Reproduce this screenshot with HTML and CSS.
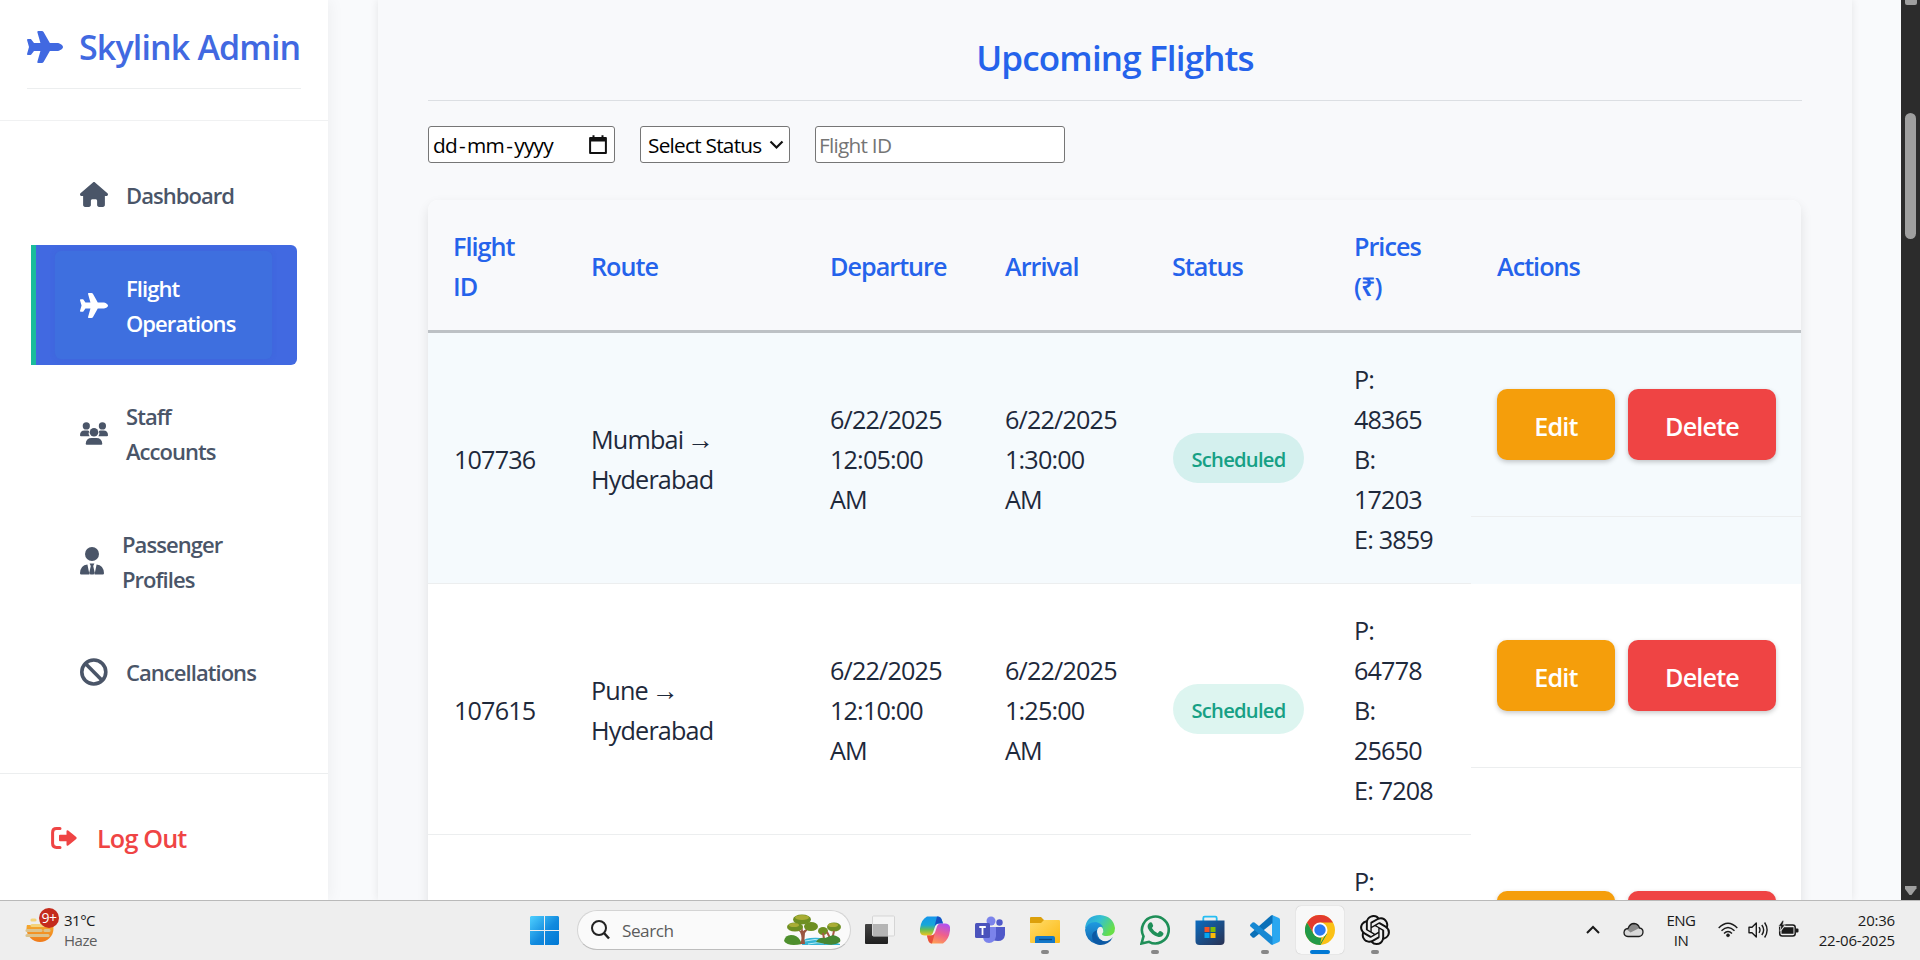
FILE: index.html
```html
<!DOCTYPE html>
<html lang="en">
<head>
<meta charset="utf-8">
<title>Skylink Admin</title>
<link rel="stylesheet" href="styles.css">
</head>
<body>
<svg class="defs" width="0" height="0" aria-hidden="true">
  <symbol id="plane" viewBox="0 0 576 512"><path d="M482.3 192c34.2 0 93.7 29 93.7 64c0 36-59.5 64-93.7 64l-116.6 0L265.2 495.9c-5.7 10-16.3 16.1-27.8 16.1l-56.2 0c-10.6 0-18.3-10.2-15.4-20.4l49-171.6L112 320 68.8 377.6c-3 4-7.8 6.4-12.8 6.4l-42 0c-7.8 0-14-6.3-14-14c0-1.3 .2-2.6 .5-3.9L32 256 .5 145.9c-.4-1.3-.5-2.6-.5-3.9c0-7.8 6.3-14 14-14l42 0c5 0 9.8 2.4 12.8 6.4L112 192l102.9 0-49-171.6C162.9 10.2 170.6 0 181.2 0l56.2 0c11.5 0 22.1 6.2 27.8 16.1L365.7 192l116.6 0z"/></symbol>
</svg>
<div class="app">
  <aside class="sidebar">
    <header class="brand">
      <div class="brand-row"><svg width="36" height="32" fill="currentColor"><use href="#plane"/></svg><span>Skylink Admin</span></div>
    </header>
    <nav class="nav">
      <a class="nav-item"><svg width="28" height="25" viewBox="0 0 576 512" fill="currentColor"><path d="M575.8 255.5c0 18-15 32.1-32 32.1h-32l.7 160.2c0 2.7-.2 5.4-.5 8.1V472c0 22.1-17.9 40-40 40H456c-1.1 0-2.2 0-3.3-.1c-1.4 .1-2.8 .1-4.2 .1H416 392c-22.1 0-40-17.9-40-40V448 384c0-17.7-14.3-32-32-32H256c-17.7 0-32 14.3-32 32v64 24c0 22.1-17.9 40-40 40H160 128.1c-1.5 0-3-.1-4.5-.2c-1.2 .1-2.4 .2-3.6 .2H104c-22.1 0-40-17.9-40-40V360c0-.9 0-1.9 .1-2.8V287.6H32c-18 0-32-14-32-32.1c0-9 3-17 10-24L266.4 8c7-7 15-8 22-8s15 2 21 7L564.8 231.5c8 7 12 15 11 24z"/></svg><span>Dashboard</span></a>
      <a class="nav-item active"><svg width="28" height="25" fill="currentColor"><use href="#plane"/></svg><span>Flight<br>Operations</span></a>
      <a class="nav-item"><svg width="28" height="23" viewBox="0 0 28 23" fill="currentColor"><circle cx="6.3" cy="3.9" r="3.6"/><circle cx="22.4" cy="3.9" r="3.6"/><circle cx="14" cy="10.2" r="4.3"/><path d="M0 13.2Q0 8.7 4.5 8.6h3.2q1 0 1.4.4-1.2 2.8.5 5.3H1Q0 14.3 0 13.2zM28 13.2q0-4.5-4.5-4.6h-3.2q-1 0-1.4.4 1.2 2.8-.5 5.3H27q1 0 1-1.1zM5.7 21.7q.3-5.7 6-5.7h4.6q5.7 0 6 5.7 0 1-1 1H6.7q-1 0-1-1z"/></svg><span>Staff<br>Accounts</span></a>
      <a class="nav-item"><svg width="24" height="28" viewBox="0 0 24 28" fill="currentColor"><circle cx="12" cy="7" r="7"/><path d="M0 26.200Q.4 18 7.400 17.400L9.500 27.600H1.300Q0 27.600 0 26.200zM24 26.200q-.4-8.200-7.400-8.800l-2.100 10.200h8.200q1.300 0 1.300-1.400zM9.600 16.400h4.800L13.200 19l1.600 7-1.200 1.600h-3.200L9.200 26l1.600-7z"/></svg><span>Passenger<br>Profiles</span></a>
      <a class="nav-item"><svg width="28" height="28" viewBox="0 0 28 28" fill="none" stroke="currentColor" stroke-width="3.6"><circle cx="13.8" cy="14" r="12"/><path d="M5.4 5.6l16.8 16.8"/></svg><span>Cancellations</span></a>
    </nav>
    <footer class="logout"><svg width="26" height="22" viewBox="0 0 26 22"><path d="M9 1.6H5.5Q1.6 1.6 1.6 5.5v11q0 3.9 3.9 3.9H9" fill="none" stroke="currentColor" stroke-width="3" stroke-linecap="round"/><path d="M9 7.8h6.5V4.5q0-1.7 1.7-1 .3.1 8 6.5.9 1 0 2-7.7 6.4-8 6.5-1.7.7-1.7-1v-3.3H9q-1 0-1-1V8.8q0-1 1-1z" fill="currentColor"/></svg><span>Log Out</span></footer>
  </aside>
  <main class="content">
    <section class="panel">
      <h2>Upcoming Flights</h2>
      <div class="filters">
        <div class="date"><span>dd<i>-</i>mm<i>-</i>yyyy</span><svg width="18" height="19" viewBox="0 0 18 19"><path d="M1.1 3h15.800v14.900H1.100z" fill="none" stroke="#111" stroke-width="2" stroke-linejoin="round"/><path d="M1 2.500h16v4H1zM3.500.2h2v3h-2zM12.500.2h2v3h-2z" fill="#111"/></svg></div>
        <div class="select-wrap"><select class="status-select"><option>Select Status</option></select><svg class="caret" width="15" height="10" viewBox="0 0 15 10"><path d="M1.500 1.500l6 6 6-6" fill="none" stroke="#111" stroke-width="2.200"/></svg></div>
        <input class="flight-input" placeholder="Flight ID">
      </div>
      <table class="flights">
        <colgroup><col class="c1"><col class="c2"><col class="c3"><col class="c4"><col class="c5"><col class="c6"><col class="c7"></colgroup>
        <thead><tr><th>Flight<br>ID</th><th>Route</th><th>Departure</th><th>Arrival</th><th>Status</th><th>Prices<br>(₹)</th><th>Actions</th></tr></thead>
        <tbody>
          <tr class="hover"><td>107736</td><td>Mumbai <b>→</b><br>Hyderabad</td><td>6/22/2025<br>12:05:00<br>AM</td><td>6/22/2025<br>1:30:00<br>AM</td><td class="st"><span class="badge">Scheduled</span></td><td>P:<br>48365<br>B:<br>17203<br>E: 3859</td><td class="act"><div class="actions"><button class="edit">Edit</button><button class="delete">Delete</button></div></td></tr>
          <tr><td>107615</td><td>Pune <b>→</b><br>Hyderabad</td><td>6/22/2025<br>12:10:00<br>AM</td><td>6/22/2025<br>1:25:00<br>AM</td><td class="st"><span class="badge">Scheduled</span></td><td>P:<br>64778<br>B:<br>25650<br>E: 7208</td><td class="act"><div class="actions"><button class="edit">Edit</button><button class="delete">Delete</button></div></td></tr>
          <tr><td></td><td></td><td></td><td></td><td></td><td>P:<br><br><br><br><br></td><td class="act"><div class="actions"><button class="edit"></button><button class="delete"></button></div></td></tr>
        </tbody>
      </table>
    </section>
  </main>
  <div class="scrollbar"><i class="up"></i><i class="thumb"></i><i class="down"></i></div>
</div>
<footer class="taskbar">
  <div class="weather">
    <div class="sun"><svg width="30" height="28" viewBox="0 0 30 28"><defs><linearGradient id="sg" x1="0" y1="0" x2="0" y2="1"><stop offset="0" stop-color="#f7c43a"/><stop offset="1" stop-color="#f07a1a"/></linearGradient></defs><circle cx="15" cy="13.500" r="13.500" fill="url(#sg)"/><path d="M0 0h15v10H0z" fill="#eee"/><g stroke="#f3d37c" stroke-width="3.200" stroke-linecap="round"><path d="M7 5h3M7 10.500h14"/><path d="M2 15.500h14M20 15.500h4M2 20.500h21" stroke="#dcc38d"/></g></svg><span class="count">9+</span></div>
    <div class="two"><span>31°C</span><span class="dim">Haze</span></div>
  </div>
  <div class="apps">
    <svg class="start" width="29" height="29" viewBox="0 0 29 29"><defs><linearGradient id="wg" x1="0" y1="0" x2="1" y2="1"><stop offset="0" stop-color="#4fd0ff"/><stop offset=".55" stop-color="#128ade"/><stop offset="1" stop-color="#0078d4"/></linearGradient></defs><path d="M1 0h13v14H0V1zM15 0h13l1 1v13H15zM0 15h14v14H1l-1-1zM15 15h14v13l-1 1H15z" fill="url(#wg)"/></svg>
    <div class="search">
      <svg width="19" height="20" viewBox="0 0 19 20" fill="none" stroke="#222" stroke-width="2"><circle cx="8" cy="8" r="7"/><path d="M13 13l5 5.500" stroke-width="2.500"/></svg>
      <span>Search</span>
      <svg class="trees" width="57" height="32" viewBox="0 0 57 32"><path d="M0 27q1-6 7-6t9 5l2 4q-14 3-18-3z" fill="#4e8f2d"/><path d="M18 31q-1-6 8-7t14 1l16 5v1z" fill="#35b5d5"/><path d="M21 27q10-3 20 0M24 30q8-2 20-1" stroke="#b9eef5" fill="none"/><path d="M16 30q3-6 0-12l-7-6 8 5 1-6 1 6 8-5-6 7q-1 6 0 11z" fill="#9a5540"/><g fill="#6e8f22"><ellipse cx="11" cy="13" rx="8" ry="4.500"/><ellipse cx="18" cy="5.500" rx="9" ry="5"/><ellipse cx="27" cy="12.500" rx="7" ry="4.500"/><ellipse cx="39" cy="17" rx="5" ry="4"/><ellipse cx="50" cy="13" rx="7" ry="4.500"/></g><g fill="#a9ad35"><ellipse cx="18" cy="3.500" rx="7" ry="2.500"/><ellipse cx="10" cy="11" rx="5" ry="2"/><ellipse cx="49" cy="11" rx="5" ry="2"/></g><path d="M39 19l2 11M50 17l-3 13M43 18l4 8" stroke="#a65a45" stroke-width="2"/><path d="M32 28q3-5 9-4l8-3q9 2 7 7-6 4-14 2z" fill="#468832"/></svg>
    </div>
    <div class="slot"><svg width="30" height="30" viewBox="0 0 30 30"><defs><linearGradient id="tg" x1="0" y1="0" x2="0" y2="1"><stop offset="0" stop-color="#444"/><stop offset="1" stop-color="#1f1f1f"/></linearGradient></defs><rect x="0" y="9" width="23" height="20" rx="1" fill="url(#tg)"/><rect x="7.500" y="1" width="22" height="20" rx="1" fill="#f5f5f5" fill-opacity=".85" stroke="#d5d5d5"/><path d="M8 9h15v12H8z" fill="#b5b5b5"/></svg></div>
    <div class="slot"><svg width="30" height="30" viewBox="0 0 30 30"><defs><linearGradient id="ca" x1="0" y1="0" x2="0" y2="1"><stop offset="0" stop-color="#1596ec"/><stop offset=".45" stop-color="#18a7d8"/><stop offset=".7" stop-color="#68bd55"/><stop offset="1" stop-color="#f2c51d"/></linearGradient><linearGradient id="cb" x1=".7" y1="0" x2=".3" y2="1"><stop offset="0" stop-color="#b151ef"/><stop offset=".5" stop-color="#f0608b"/><stop offset="1" stop-color="#ffa052"/></linearGradient></defs><path d="M7 1.500h11q3 0 4 4l1 3h-4q-3 0-4 3l-2 6q-1 3-4 3H5q-6 0-5-7 1-9 7-12z" fill="url(#ca)"/><path d="M17 1.500q4 0 5 4l1 3h-4q-4 0-5 5z" fill="#1750c3"/><path d="M23 28.500H12q-3 0-4-4l-1-4h4q3 0 4-3l2-6q1-3 4-3h4q6 0 5 7-1 9-7 13z" fill="url(#cb)"/><path d="M7 20.500h4q3 0 4-3l-3 11q-3 0-4-4z" fill="#e8503b"/></svg></div>
    <div class="slot"><svg width="30" height="30" viewBox="0 0 30 30"><circle cx="16" cy="6" r="4.500" fill="#7b83eb"/><circle cx="24.500" cy="7.500" r="3.200" fill="#5059c9"/><path d="M18 12h12v8q-1 6-7 6t-7-3z" fill="#5059c9"/><path d="M8 12h13v9q-1 7-7 7t-6-7z" fill="#7b83eb"/><rect x="0" y="8" width="15" height="15" rx="1.500" fill="#4b53bc"/><path d="M4.300 12h6.500M7.500 12v8" stroke="#fff" stroke-width="1.800"/></svg></div>
    <div class="slot running"><svg width="30" height="30" viewBox="0 0 30 30"><defs><linearGradient id="fg" x1="0" y1="0" x2="1" y2="1"><stop offset="0" stop-color="#ffdc6b"/><stop offset="1" stop-color="#fdb912"/></linearGradient></defs><path d="M0 3q0-1 1-1h10l3 3h15v8H0z" fill="#dca00b"/><path d="M0 8h11l3-3h15q1 0 1 1v21q0 1-1 1H1q-1 0-1-1z" fill="url(#fg)"/><path d="M5 28v-5q0-2 2-2h16q2 0 2 2v5z" fill="#1478c9"/><path d="M9 24.500h13" stroke="#0a4a85" stroke-width="1.300"/></svg></div>
    <div class="slot"><svg width="30" height="30" viewBox="0 0 30 30"><defs><linearGradient id="ea" x1="0" y1="0" x2="1" y2=".5"><stop offset="0" stop-color="#259de2"/><stop offset=".5" stop-color="#35c1d1"/><stop offset="1" stop-color="#68df48"/></linearGradient><linearGradient id="eb" x1="0" y1="0" x2="0" y2="1"><stop offset="0" stop-color="#1f9be0"/><stop offset="1" stop-color="#1263ae"/></linearGradient></defs><path d="M0 14Q1 0 15 0q13 1 15 13 0 8-8 8-5 0-5-2 2-2 1-5-4-6-10-5-6 1-8 5z" fill="url(#ea)"/><path d="M0 15Q2 7 11 7q5 1 7 5-6-1-6 5 1 9 9 10-4 4-10 2Q1 26 0 15z" fill="url(#eb)"/><path d="M12 15q-3 8 6 11 6 1 10-4-4 8-13 8-8-1-8-9 0-4 5-6z" fill="#0c59a4"/></svg></div>
    <div class="slot running"><svg width="30" height="30" viewBox="0 0 30 30"><path d="M1.500 28.500l2-7.200A13.400 13.400 0 1 1 9 26.800z" fill="none" stroke="#1f8f58" stroke-width="2.600"/><path d="M9.700 7.500q1.800-1 2.500.8l1 2.400q0 1-1.300 2.200 2 3.700 5.800 5.300l1.700-2q.8-.6 3.400 1.200 1.300.7.300 2.500-1.500 2.500-4.600 2-7.500-1.800-10.600-8.600-1.100-3.600 1.800-5.800z" fill="#1f8f58"/></svg></div>
    <div class="slot"><svg width="30" height="30" viewBox="0 0 30 30"><defs><linearGradient id="st" x1="0" y1="0" x2="1" y2="1"><stop offset="0" stop-color="#0b6cc0"/><stop offset="1" stop-color="#2a3152"/></linearGradient></defs><path d="M8.300 7V3q0-1.300 1.300-1.300h10.800Q21.700 1.700 21.700 3v4" fill="none" stroke="#25bdf2" stroke-width="1.800"/><path d="M.5 5.500h29V26q0 4-4 4h-21q-4 0-4-4z" fill="url(#st)"/><path d="M9.500 12h5v5h-5z" fill="#f35325"/><path d="M15.500 12h5v5h-5z" fill="#81bc06"/><path d="M9.500 18h5v5h-5z" fill="#05a6f0"/><path d="M15.500 18h5v5h-5z" fill="#ffba08"/></svg></div>
    <div class="slot running"><svg width="30" height="30" viewBox="0 0 30 30"><path d="M22 0l7 3q1 .5 1 2v20q0 1.500-1 2l-7 3z" fill="#2aa7f0"/><path d="M22.500 0v8L4.500 22.500q-1 .7-2 0l-2-2q-1-1 0-2L21 .5z" fill="#0a70b8"/><path d="M22.500 30v-8L4.500 7.500q-1-.7-2 0l-2 2q-1 1 0 2L21 29.500z" fill="#1688d3"/></svg></div>
    <div class="slot running current"><svg width="30" height="30" viewBox="0 0 30 30"><circle cx="15" cy="15" r="15" fill="#fbc116"/><path d="M2 7.500A15 15 0 0 1 28 7.500H15L8.500 18.800z" fill="#e33b2e"/><path d="M2 7.500l6.500 11.300q3 4.500 8 3.500L15 30A15 15 0 0 1 2 7.500z" fill="#229a48"/><path d="M15 30l6.500-11.200" stroke="#229a48" stroke-width="1"/><circle cx="15" cy="15" r="7.500" fill="#fff"/><circle cx="15" cy="15" r="5.700" fill="#2a7af2"/></svg></div>
    <div class="slot running"><svg width="30" height="30" viewBox="0 0 24 24"><path fill="#111" d="M22.2819 9.8211a5.9847 5.9847 0 0 0-.5157-4.9108 6.0462 6.0462 0 0 0-6.5098-2.9A6.0651 6.0651 0 0 0 4.9807 4.1818a5.9847 5.9847 0 0 0-3.9977 2.9 6.0462 6.0462 0 0 0 .7427 7.0966 5.98 5.98 0 0 0 .511 4.9107 6.051 6.051 0 0 0 6.5146 2.9001A5.9847 5.9847 0 0 0 13.2599 24a6.0557 6.0557 0 0 0 5.7718-4.2058 5.9894 5.9894 0 0 0 3.9977-2.9001 6.0557 6.0557 0 0 0-.7475-7.0729zm-9.022 12.6081a4.4755 4.4755 0 0 1-2.8764-1.0408l.1419-.0804 4.7783-2.7582a.7948.7948 0 0 0 .3927-.6813v-6.7369l2.02 1.1686a.071.071 0 0 1 .038.052v5.5826a4.504 4.504 0 0 1-4.4945 4.4944zm-9.6607-4.1254a4.4708 4.4708 0 0 1-.5346-3.0137l.142.0852 4.783 2.7582a.7712.7712 0 0 0 .7806 0l5.8428-3.3685v2.3324a.0804.0804 0 0 1-.0332.0615L9.74 19.9502a4.4992 4.4992 0 0 1-6.1408-1.6464zM2.3408 7.8956a4.485 4.485 0 0 1 2.3655-1.9728V11.6a.7664.7664 0 0 0 .3879.6765l5.8144 3.3543-2.0201 1.1685a.0757.0757 0 0 1-.071 0l-4.8303-2.7865A4.504 4.504 0 0 1 2.3408 7.872zm16.5963 3.8558L13.1038 8.364 15.1192 7.2a.0757.0757 0 0 1 .071 0l4.8303 2.7913a4.4944 4.4944 0 0 1-.6765 8.1042v-5.6772a.79.79 0 0 0-.407-.667zm2.0107-3.0231l-.142-.0852-4.7735-2.7818a.7759.7759 0 0 0-.7854 0L9.409 9.2297V6.8974a.0662.0662 0 0 1 .0284-.0615l4.8303-2.7866a4.4992 4.4992 0 0 1 6.6802 4.66zM8.3065 12.863l-2.02-1.1638a.0804.0804 0 0 1-.038-.0567V6.0742a4.4992 4.4992 0 0 1 7.3757-3.4537l-.142.0805L8.704 5.459a.7948.7948 0 0 0-.3927.6813zm1.0976-2.3654l2.602-1.4998 2.6069 1.4998v2.9994l-2.5974 1.4997-2.6067-1.4997Z"/></svg></div>
  </div>
  <div class="tray">
    <svg width="14" height="9" viewBox="0 0 14 9"><path d="M1 8l6-6 6 6" fill="none" stroke="#1a1a1a" stroke-width="2"/></svg>
    <svg class="cloud" width="21" height="16" viewBox="0 0 21 16"><path d="M5 14.500q-4-.3-4-4 .3-3.700 4-4 2-5 6-5 4.500.3 5.500 4.500 3.500.5 3.500 4-.2 4-4 4.500z" fill="#d9d9d9"/><path d="M4 7.500q3-6 7-6 4.500.3 5.500 4.500l-9 4.500z" fill="#8a8a8a"/><path d="M5 14.500q-4-.3-4-4 .3-3.700 4-4 2-5 6-5 4.500.3 5.500 4.500 3.500.5 3.500 4-.2 4-4 4.500z" fill="none" stroke="#1d1d1d" stroke-width="1.300"/></svg>
    <div class="two lang"><span>ENG</span><span>IN</span></div>
    <svg class="wifi" width="20" height="16" viewBox="0 0 20 16" fill="none" stroke="#1a1a1a" stroke-width="1.400"><path d="M.7 6q9.300-9.500 18.600 0M3.500 8.800q6.500-6.500 13 0M6 11.500q4-4 8 0"/><circle cx="10" cy="13.300" r="1.500" fill="#1a1a1a" stroke-width=".6"/></svg>
    <svg class="vol" width="21" height="18" viewBox="0 0 21 18" fill="none" stroke="#1a1a1a" stroke-width="1.400"><path d="M1 6.200h3L8.300 2v14L4 11.800H1z" stroke-linejoin="round"/><path d="M11 6.200q2 2.800 0 5.600M13.800 4q3.700 5 0 10M16.600 1.500q5 7.500 0 15"/></svg>
    <svg class="bat" width="21" height="18" viewBox="0 0 21 18"><rect x="1.700" y="5" width="15.500" height="11" rx="2.500" fill="none" stroke="#1a1a1a" stroke-width="1.500"/><path d="M18 8.500h1.500q1 0 1 1v2q0 1-1 1H18zM6 7.300h9.500v6.500H3.500v-3z" fill="#1a1a1a"/><path d="M4.500.5L.3 6.300h2.500L2 11.200 7.300 4.800H4.800L6 .5z" fill="#1a1a1a" stroke="#eee" stroke-width=".7"/></svg>
    <div class="two clock"><span>20:36</span><span>22-06-2025</span></div>
  </div>
</footer>
</body>
</html>
```
FILE: styles.css
```css
* { box-sizing: border-box; }
body {
  margin: 0;
  width: 1920px;
  height: 960px;
  overflow: hidden;
  background: #f9fafc;
  color: #1e293b;
  font-family: "Open Sans", "Noto Sans", sans-serif;
  font-size: 25.2px;
  letter-spacing: -0.84px;
}
svg { display: block; flex: none; }
.defs { position: absolute; }
.app { display: flex; height: 900px; overflow: hidden; }

/* Sidebar */
.sidebar {
  flex: none;
  display: flex;
  flex-direction: column;
  width: 328px;
  background: #fff;
  box-shadow: 2px 0 15px rgba(0, 0, 0, .05);
}
.brand { height: 121px; padding: 0 27px; border-bottom: 1px solid #f0f1f2; }
.brand-row {
  display: flex;
  align-items: center;
  gap: 16px;
  height: 89px;
  padding-top: 5px;
  border-bottom: 1px solid #eceeef;
  color: #4169e1;
  font-size: 34px;
  font-weight: 600;
  letter-spacing: -0.85px;
  white-space: nowrap;
}
.nav { flex: 1; display: flex; flex-direction: column; gap: 8px; padding: 31px 31px 0; }
.nav-item {
  display: flex;
  align-items: center;
  gap: 18px;
  padding: 25px 0 25px 49px;
  color: #4a5568;
  font-size: 22px;
  font-weight: 600;
  line-height: 35px;
  letter-spacing: -0.95px;
}
.nav-item span { padding-top: 1px; margin-bottom: -1px; }
.nav-item.active {
  position: relative;
  padding-left: 44px;
  border-left: 5px solid #1abc9c;
  border-radius: 0 6px 6px 0;
  background: #4169e1;
  color: #fff;
}
.nav-item.active::before {
  content: "";
  position: absolute;
  inset: 6px 25px 6px 19px;
  border-radius: 6px;
  background: rgba(62, 113, 221, .75);
  box-shadow: 0 0 5px rgba(50, 95, 205, .25);
}
.nav-item.active > * { position: relative; }
.logout {
  display: flex;
  align-items: center;
  gap: 20px;
  height: 127px;
  padding: 2px 0 0 51px;
  border-top: 1px solid #eceeef;
  color: #ef4444;
  font-weight: 600;
}

/* Main panel */
.content { flex: 1; padding: 0 49px 0 50px; }
.panel {
  height: 900px;
  padding: 0 50px;
  background: #f8f9fb;
  box-shadow: 0 0 8px rgba(0, 0, 0, .09);
}
.panel h2 {
  height: 101px;
  margin: 0;
  padding-top: 33px;
  border-bottom: 1px solid #dcdfe3;
  color: #2563eb;
  font-size: 35px;
  font-weight: 600;
  line-height: 50px;
  text-align: center;
}
.filters { display: flex; gap: 25px; margin-top: 25px; height: 37px; font-size: 20.8px; }
.date {
  display: flex;
  align-items: center;
  justify-content: space-between;
  width: 187px;
  padding: 1px 7px 0 4px;
  border: 1px solid #767676;
  border-radius: 3px;
  background: #fff;
  color: #000;
  letter-spacing: -0.7px;
}
.date i { font-style: normal; padding: 0 2px; }
.date svg { margin-top: -2px; }
.select-wrap { position: relative; }
.caret { position: absolute; right: 6px; top: 14px; pointer-events: none; }
.status-select, .flight-input {
  height: 37px;
  padding: 1px 3px 0;
  border: 1px solid #767676;
  border-radius: 3px;
  background-color: #fff;
  color: #000;
  font: inherit;
  letter-spacing: -0.75px;
}
.status-select { appearance: none; width: 150px; padding-left: 7px; }
.flight-input { width: 250px; }
.flight-input::placeholder { color: #757575; }

.flights {
  table-layout: fixed;
  width: 1373px;
  margin-top: 37px;
  border-spacing: 0;
  border-radius: 10px;
  background: #fff;
  box-shadow: 0 5px 12px rgba(0, 0, 0, .1);
  line-height: 40px;
}
.c1 { width: 138px; }
.c2 { width: 239px; }
.c3 { width: 175px; }
.c4 { width: 167px; }
.c5 { width: 182px; }
.c6 { width: 142px; }
.c7 { width: 330px; }
th {
  padding: 26px 0 24px 25px;
  border-bottom: 3px solid #bdc1c5;
  background: #f8f9fb;
  color: #2563eb;
  font-weight: 600;
  letter-spacing: -1px;
  text-align: left;
}
th:first-child { border-top-left-radius: 10px; }
th:last-child { border-top-right-radius: 10px; padding-left: 26px; }
td { height: 251px; padding: 26px 0 24px 25px; border-bottom: 1px solid #eceeef; white-space: nowrap; }
td:first-child { padding-left: 26px; }
td.st { padding-top: 25px; padding-bottom: 25px; }
td b { font-weight: 400; font-size: 27px; line-height: 1; margin-left: -2px; }
.hover td { background: #f5fafd; }
td.act { padding: 0; border: 0; vertical-align: top; }
.actions {
  display: flex;
  gap: 13px;
  height: 184px;
  padding: 56px 0 0 26px;
  border-bottom: 1px solid #eceeef;
}
.actions button {
  height: 71px;
  padding: 2px 0 0;
  border: 0;
  border-radius: 10px;
  box-shadow: 0 2px 5px rgba(0, 0, 0, .22);
  color: #fff;
  font: inherit;
  font-weight: 600;
  letter-spacing: inherit;
}
.actions .edit { width: 118px; background: #f59e0b; }
.actions .delete { width: 148px; background: #ef4444; }
.badge {
  display: inline-flex;
  align-items: center;
  justify-content: center;
  width: 131px;
  height: 50px;
  padding-top: 1px;
  margin-left: 1px;
  border-radius: 25px;
  background: rgba(26, 188, 156, .15);
  color: #16a085;
  font-size: 20.2px;
  font-weight: 600;
  letter-spacing: -0.75px;
  vertical-align: middle;
}

/* Window scrollbar */
.scrollbar {
  display: flex;
  flex-direction: column;
  align-items: center;
  width: 19px;
  background: #2c2c2c;
}
.up { width: 12px; height: 5px; border-radius: 0 0 2px 2px; background: #9f9f9f; }
.thumb { width: 11px; height: 126px; margin: 108px 0 auto; border-radius: 6px; background: #9f9f9f; }
.down { width: 12px; height: 9px; margin-bottom: 5px; background: #9f9f9f; clip-path: polygon(0 0, 100% 0, 100% 25%, 58% 100%, 42% 100%, 0 25%); }

/* Taskbar */
.taskbar {
  display: flex;
  height: 60px;
  padding: 0 25px;
  border-top: 1px solid #b9b9b9;
  background: #eee;
  color: #1a1a1a;
  font-size: 15px;
  letter-spacing: -0.5px;
}
.weather { display: flex; width: 505px; }
.sun { position: relative; width: 39px; padding-top: 14px; }
.count {
  position: absolute;
  left: 14px;
  top: 7px;
  width: 20px;
  height: 20px;
  border-radius: 50%;
  background: #c42b1c;
  color: #fff;
  font-size: 14px;
  line-height: 20px;
  text-align: center;
}
.two { display: flex; flex-direction: column; padding-top: 9px; line-height: 20px; }
.dim { color: #5d5d5d; }
.apps { display: flex; }
.start { margin: 15px 18px 0 0; }
.search {
  display: flex;
  align-items: center;
  width: 274px;
  height: 40px;
  margin: 9px 1px 0 0;
  padding: 0 9px 0 13px;
  border: 1px solid #d4d4d4;
  border-bottom-color: #bdbdbd;
  border-radius: 20px;
  background: #fafafa;
  color: #5c5c5c;
  font-size: 17.2px;
}
.search span { margin: 0 auto 0 12px; }
.slot { position: relative; width: 55px; height: 59px; padding: 14px 0 0 13px; }
.slot.running::after {
  content: "";
  position: absolute;
  left: 24px;
  bottom: 6px;
  width: 8px;
  height: 4px;
  border-radius: 2px;
  background: #868686;
}
.slot svg { position: relative; }
.slot.current::before {
  content: "";
  position: absolute;
  left: 4px;
  top: 5px;
  width: 48px;
  height: 48px;
  border-radius: 5px;
  background: #f8f8f8;
  box-shadow: 0 0 1px rgba(0, 0, 0, .3);
}
.slot.current::after { left: 18px; width: 20px; background: #0078d4; }
.tray { display: flex; align-items: center; margin-left: auto; height: 57px; }
.tray .two { padding-top: 0; }
.cloud { margin-left: 23px; }
.lang { width: 34px; margin-left: 20px; align-items: center; }
.wifi { margin-left: 20px; }
.vol { margin-left: 10px; }
.bat { margin: -2px 0 0 9px; }
.clock { width: 96px; align-items: flex-end; letter-spacing: -0.2px; }
```
